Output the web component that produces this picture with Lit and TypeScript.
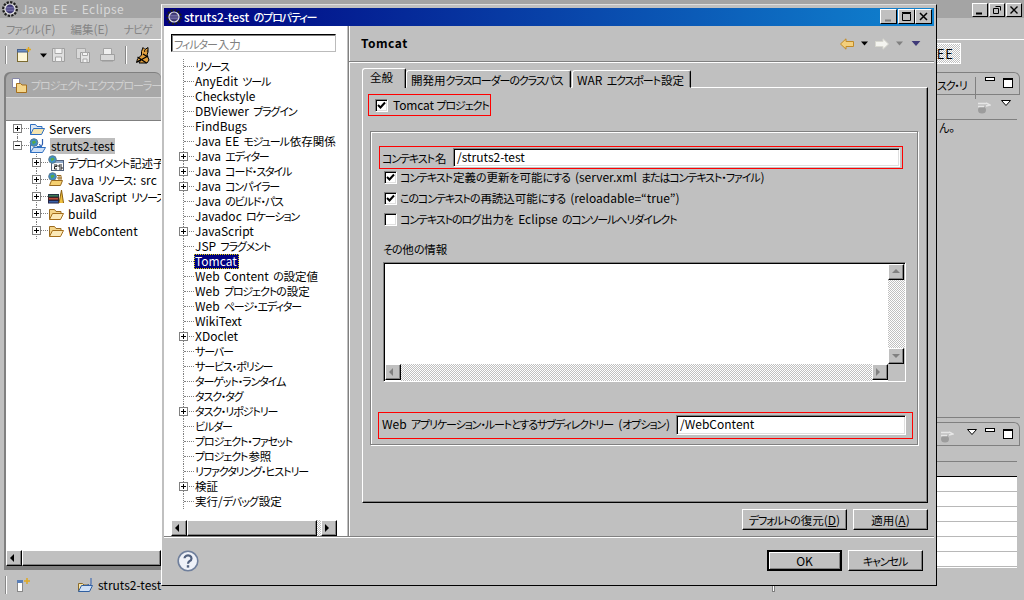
import { LitElement, html, css, TemplateResult } from "lit";
import { customElement } from "lit/decorators.js";

const jp = (s: string) =>
  s.split(/([\u3040-\u30FF]+|[\u4E00-\u9FFF]+)/).map((p, i) => {
    if (i % 2 === 0) return p;
    return /[\u3040-\u30FF]/.test(p) ? html`<span class="k">${p}</span>` : html`<span class="h">${p}</span>`;
  });

const gear = (s = 16) => html`<svg width=${s} height=${s} viewBox="0 0 16 16" class="ico">
  <circle cx="8" cy="8" r="6.700" fill="none" stroke="#1c1c1c" stroke-width="2.400" stroke-dasharray="2.200 1.300"/>
  <circle cx="8" cy="8" r="5.600" fill="#e4e4e4"/>
  <circle cx="8" cy="8" r="4.400" fill="#3b3570"/>
  <path d="M4 6.300h8M3.800 8h8.400M4 9.700h8" stroke="#8a86c0" stroke-width=".8"/>
</svg>`;

const folder = (open = true) => html`<svg width="16" height="14" viewBox="0 0 16 14" class="ico">
  <path d="M1.500 12.500V2.500h5l1.500 2h5v2" fill="#f4d58a" stroke="#9a6a20"/>
  <path d="M1.500 12.500l3-6h11l-3 6z" fill=${open ? "#fbe9b8" : "#f0c868"} stroke="#a56f1c"/>
</svg>`;

const serverFolder = () => html`<svg width="16" height="14" viewBox="0 0 16 14" class="ico">
  <path d="M1.500 12.500V2.500h5l1.500 2h5v2" fill="#dfe8f4" stroke="#2f6fc0"/>
  <path d="M1.500 12.500l3-6h11l-3 6z" fill="#f5e4ae" stroke="#2f6fc0"/>
</svg>`;

const webProject = () => html`<svg width="18" height="16" viewBox="0 0 18 16" class="ico">
  <path d="M1.500 14.500V6.500h5l1.500 2h5" fill="#dfe8f4" stroke="#2f6fc0"/>
  <path d="M1.500 14.500l3-5h12l-3 5z" fill="#cfe0f6" stroke="#2f6fc0"/>
  <circle cx="5" cy="4.500" r="3.800" fill="#3c8fc8" stroke="#5a7a90"/>
  <path d="M3 3.500l3-1 1 2-3 2z" fill="#58a848"/>
  <path d="M13.500 1v5a1.500 1.500 0 0 1-3 0" fill="none" stroke="#2f5fb0" stroke-width="1.200"/>
</svg>`;

const deployIcon = () => html`<svg width="16" height="16" viewBox="0 0 16 16" class="ico">
  <rect x="3.500" y="5.500" width="12" height="10" fill="#f8f8f8" stroke="#51607a"/>
  <rect x="4" y="6" width="11" height="2" fill="#8ea8c8"/>
  <circle cx="4.500" cy="4.500" r="3.800" fill="#3c8fc8" stroke="#5a7a90"/>
  <path d="M2.500 3.500l3-1 1 2-3 2z" fill="#58a848"/>
  <path d="M6 10h3v1.500H6.500V14H9M11 10h3M11 10v2h3v2h-3" fill="none" stroke="#222"/>
</svg>`;

const javaRes = () => html`<svg width="16" height="15" viewBox="0 0 16 15" class="ico">
  <circle cx="4.500" cy="4.500" r="3.800" fill="#3c8fc8" stroke="#5a7a90"/>
  <path d="M2.500 3.500l3-1 1 2-3 2z" fill="#58a848"/>
  <path d="M1.500 13.500l2-5h11l-2 5z" fill="#f5d070" stroke="#9a6a20"/>
  <path d="M9 3.500h4v5M11 3.500v5M9 6h5" fill="none" stroke="#9a6a20"/>
</svg>`;

const jsRes = () => html`<svg width="16" height="15" viewBox="0 0 16 15" class="ico">
  <rect x="0.500" y="5.500" width="10" height="2.500" fill="#3b7a54" stroke="#234"/>
  <rect x="0.500" y="8.500" width="10" height="2.500" fill="#b84a3a" stroke="#422"/>
  <rect x="0.500" y="11.500" width="10" height="2.500" fill="#3a62a8" stroke="#224"/>
  <path d="M11 14l2.500-13 2 13" fill="#f0c040" stroke="#8a6010"/>
</svg>`;

const tomcat = () => html`<svg width="16" height="17" viewBox="0 0 16 17" class="ico">
  <path d="M8 .5l2 2 3-2v4.500l-1 3 2 5-2 3H4l2-3.500-4.500 3 1-3.500 4-4 0-3.500z" fill="#e0a040" stroke="#000"/>
  <path d="M2 15l11-6M2.500 10l9 6M9 4h1.200M11.800 4h.8M8 7l5 3" stroke="#000" stroke-width="1.300"/>
</svg>`;

const newIcon = () => html`<svg width="16" height="16" viewBox="0 0 16 16" class="ico">
  <rect x="1.500" y="2.500" width="10" height="12" fill="#fdf6d8" stroke="#7a6a30"/>
  <rect x="1.500" y="2.500" width="10" height="2.500" fill="#6c8ec4" stroke="#47618c"/>
  <path d="M12.500 0v5M10 2.500h5" stroke="#e0a820" stroke-width="1.400"/>
</svg>`;

const saveIcon = () => html`<svg width="13" height="14" viewBox="0 0 13 14" class="ico">
  <path d="M.5.5h12v13H.5z" fill="#e0e0e0" stroke="#9e9e9e"/>
  <path d="M3 .5h7v5H3zM3.500 9h6v4.500h-6z" fill="#f4f4f4" stroke="#a8a8a8"/>
</svg>`;

const saveAll = () => html`<svg width="14" height="15" viewBox="0 0 14 15" class="ico">
  <path d="M.5.5h9v10h-9z" fill="#d8d8d8" stroke="#a8a8a8"/>
  <path d="M4.500 4.500h9v10h-9z" fill="#e4e4e4" stroke="#9e9e9e"/>
  <path d="M6.500 4.500h5v3h-5zM7 11h4v3.500H7z" fill="#f4f4f4" stroke="#a8a8a8"/>
</svg>`;

const printIcon = () => html`<svg width="15" height="14" viewBox="0 0 15 14" class="ico">
  <path d="M3.500.5h8v6h-8z" fill="#efefef" stroke="#a4a4a4"/>
  <path d="M.5 6.500h14v6H.5z" fill="#d8d8d8" stroke="#a0a0a0"/>
  <path d="M2 12.500h11v1H2z" fill="#9a9a9a"/>
</svg>`;

const arrow = (left: boolean, fill: string, stroke: string) => html`<svg width="14" height="12" viewBox="0 0 14 12" class="ico">
  <path d=${left ? "M.5 6L6 .8V3.500h7.500v5H6v2.700z" : "M13.500 6L8 .8V3.500H.5v5H8v2.700z"} fill=${fill} stroke=${stroke}/>
</svg>`;

const tri = (c: string, w = 7) => html`<svg width=${w} height="5" viewBox="0 0 7 4" class="ico"><path d="M0 0h7L3.500 4z" fill=${c}/></svg>`;
const triW = () => html`<svg width="10" height="6" viewBox="0 0 10 6" class="ico"><path d="M.5.500h9L5 5.500z" fill="#fff" stroke="#000"/></svg>`;

const pin = () => html`<svg width="14" height="14" viewBox="0 0 14 14" class="ico">
  <ellipse cx="5" cy="10" rx="4" ry="3.500" fill="#9c9c9c"/>
  <path d="M1 3.500h8M9 3l4 2-4 1M1 6.500h6" stroke="#e6e6e6" stroke-width="1.500" fill="none"/>
</svg>`;

const help = () => html`<svg width="22" height="22" viewBox="0 0 22 22" class="ico">
  <circle cx="11" cy="11" r="9.800" fill="#eef1f8" stroke="#6f7f9c" stroke-width="1.600"/>
  <path d="M7.500 8.300a3.500 3 0 1 1 5.200 2.700c-1.200.8-1.700 1.300-1.700 2.800" fill="none" stroke="#50607e" stroke-width="2.200"/>
  <rect x="9.800" y="15.200" width="2.400" height="2.400" fill="#50607e"/>
</svg>`;

const statusFolder = () => html`<svg width="16" height="15" viewBox="0 0 16 15" class="ico">
  <path d="M1.500 13.500V5.500h4l1.500 1.500h5" fill="#f5e4ae" stroke="#8a6a2a"/>
  <path d="M1.500 13.500l3-6h11l-3 6z" fill="#cfe0f6" stroke="#2f5fa0"/>
  <path d="M14 0v6a1.500 1.500 0 0 1-3 0" fill="none" stroke="#2f5fb0"/>
</svg>`;

const statusNew = () => html`<svg width="15" height="15" viewBox="0 0 15 15" class="ico">
  <rect x="1.500" y="2.500" width="5" height="11" fill="#fff" stroke="#888"/>
  <rect x="1" y="2" width="6" height="3" fill="#5a7fb8"/>
  <path d="M11 0v6M8 3h6" stroke="#e0a820" stroke-width="1.500"/>
</svg>`;

const check = () => html`<svg width="9" height="9" viewBox="0 0 9 9"><path d="M1 4l2.500 2.500L8 1.500" fill="none" stroke="#000" stroke-width="2"/></svg>`;

const scrollTri = (d: "l" | "r" | "u" | "d", c = "#000") => {
  const p = { l: "M5 1v8L1 5z", r: "M1 1v8l4-4z", u: "M1 6h8L5 2z", d: "M1 3h8L5 7z" }[d];
  return html`<svg width="10" height="10" viewBox="0 0 10 10"><path d=${p} fill=${c}/></svg>`;
};

const TREE: [string, boolean][] = [
  ["リソース", false], ["AnyEdit ツール", false], ["Checkstyle", false], ["DBViewer プラグイン", false],
  ["FindBugs", false], ["Java EE モジュール依存関係", false], ["Java エディター", true], ["Java コード・スタイル", true],
  ["Java コンパイラー", true], ["Java のビルド・パス", false], ["Javadoc ロケーション", false], ["JavaScript", true],
  ["JSP フラグメント", false], ["Tomcat", false], ["Web Content の設定値", false], ["Web プロジェクトの設定", false],
  ["Web ページ・エディター", false], ["WikiText", false], ["XDoclet", true], ["サーバー", false],
  ["サービス・ポリシー", false], ["ターゲット・ランタイム", false], ["タスク・タグ", false], ["タスク・リポジトリー", true],
  ["ビルダー", false], ["プロジェクト・ファセット", false], ["プロジェクト参照", false], ["リファクタリング・ヒストリー", false],
  ["検証", true], ["実行/デバッグ設定", false],
];

@customElement("app-root")
export class AppRoot extends LitElement {
  static styles = css`
    :host { display: block; position: relative; width: 1024px; height: 600px; overflow: hidden; background: #c0c0c0;
      font: 12px/14px "Noto Sans CJK JP", "Liberation Sans", sans-serif; color: #000; word-spacing: 1.500px; }
    * { box-sizing: border-box; }
    .k { font-size: 11px; font-feature-settings: "palt"; letter-spacing: -1.100px; margin-right: 1px; }
    .h { font-size: 11.500px; }
    .ico { display: block; flex: none; }
    .eclipse { display: flex; flex-direction: column; height: 600px; }
    .etitle { height: 18px; flex: none; background: #a4a4a4; display: flex; align-items: center; padding-left: 2px; gap: 3px; color: #d8d8d8; position: relative; letter-spacing: .4px; }
    .wbtns { position: absolute; right: 2px; top: 3px; display: flex; gap: 1px; }
    .wb { width: 16px; height: 14px; background: #c0c0c0; display: flex; align-items: center; justify-content: center; border: 1px solid; border-color: #fff #000 #000 #fff; }
    .wb svg { display: block; }
    .emenu { height: 22px; flex: none; display: flex; align-items: center; padding-left: 6px; gap: 15px; color: #858585; border-bottom: 1px solid #fff; }
    .etool { height: 30px; flex: none; display: flex; align-items: center; position: relative; }
    .tsep { width: 2px; height: 18px; background: #fff; border-left: 1px solid #888; margin: 0 0 0 5px; flex: none; }
    .t1 { margin-left: 9px; } .t2 { margin-left: 8px; } .t3 { margin-left: 5px; } .t4 { margin-left: 11px; } .t5 { margin-left: 10px; } .tsep.t6 { margin-left: 10px; } .t7 { margin-left: 8px; }
    .perspective { position: absolute; left: 920px; top: 3px; width: 41px; height: 21px; border: 1px solid #fff;
      background: repeating-conic-gradient(#fff 0 25%, #c0c0c0 0 50%) 0 0/2px 2px; display: flex; align-items: center; justify-content: flex-end; padding-right: 6px; font-size: 13px; letter-spacing: 1px; }
    .emain { flex: 1; display: flex; padding: 2px 4px 0; justify-content: space-between; min-height: 0; }
    .lview { width: 157px; height: 498px; display: flex; flex-direction: column; background: #808080; border-radius: 6px 6px 0 0; padding: 1px 0 4px 2px; }
    .ltab { height: 24px; flex: none; background: #a8a8a8; border-radius: 6px 6px 0 0; display: flex; align-items: center; padding-left: 5px; gap: 3px; color: #d0d0d0; white-space: nowrap; overflow: hidden; }
    .ltool { height: 23px; flex: none; background: #c0c0c0; border-top: 1px solid #d8d8d8; }
    .ltree { flex: 1; background: #fff; border-top: 1px solid #808080; min-height: 0; overflow: hidden; }
    .lrow { height: 17px; display: flex; align-items: center; position: relative; white-space: nowrap; }
    .lrow:first-child { margin-top: -1px; }
    .lrow.l1 { padding-left: 7px; }
    .lrow.l2 { padding-left: 26px; }
    .lrow::before { content: ""; position: absolute; top: 0; height: 17px; border-left: 1px dotted #808080; }
    .lrow.l1::before { left: 11px; }
    .lrow.l2::before { left: 30px; }
    .lrow.l1:first-child::before { top: 9px; height: 8px; }
    .lrow.l1:nth-child(2)::before { height: 8px; }
    .box { width: 9px; height: 9px; border: 1px solid #808080; background: #fff; display: flex; align-items: center; justify-content: center; flex: none; position: relative; z-index: 1; }
    .box svg { display: block; }
    .conn { width: 7px; border-top: 1px dotted #808080; flex: none; }
    .ltext { margin-left: 3px; padding: 0 1px; height: 16px; line-height: 15px; }
    .ltext.sel { background: #bdbdbd; }
    .lscroll { height: 16px; flex: none; background: #c0c0c0; display: flex; }
    .rcol { width: 120px; display: flex; flex-direction: column; height: 498px; gap: 4px; }
    .rpanel { flex: none; height: 346px; border-bottom: 1px solid #808080; }
    .rtabs { height: 23px; display: flex; justify-content: flex-end; align-items: flex-start; border-bottom: 1px solid #808080; position: relative; gap: 8px; padding: 5px 6px 0 0; border-top: 1px solid #808080; border-top-right-radius: 6px; border-right: 1px solid #808080; }
    .rlabel { position: absolute; left: 0; top: 4px; width: 76px; padding-left: 37px; white-space: nowrap; height: 22px; border-right: 1px solid #808080; line-height: 16px; }
    .minb { width: 10px; height: 4px; background: #fff; border: 1px solid #000; margin-top: -1px; }
    .maxb { width: 10px; height: 10px; background: #fff; border: 1px solid #000; border-top-width: 2px; }
    .rtool { height: 25px; display: flex; justify-content: flex-end; gap: 10px; padding: 5px 6px 0 0; border-bottom: 1px solid #808080; margin-right: 3px; }
    .rtext { padding: 0 0 0 39px; }
    .rpanel2 { flex: 1; display: flex; flex-direction: column; }
    .rtabs2 { height: 24px; display: flex; justify-content: flex-end; gap: 8px; align-items: flex-start; padding: 6px 6px 0 0; border-bottom: 1px solid #808080; border-top: 1px solid #808080; border-right: 1px solid #808080; border-top-right-radius: 6px; }
    .rtabs2 .pinw { margin-right: 5px; }
    .rhead { height: 16px; border-bottom: 1px solid #808080; flex: none; margin-right: 3px; }
    .rtable { flex: 1; background: #fff; border-top: 1px solid #000; margin: 14px 3px 2px 0; display: flex; flex-direction: column; }
    .rtable div { height: 15px; border-bottom: 1px solid #b8b8b8; flex: none; }
    .estatus { height: 30px; flex: none; display: flex; align-items: center; position: relative; }
    .stext { margin-left: 5px; }
    .s1 { margin-left: 9px; } .s2 { margin-left: 46px; }

    .dialog { position: absolute; left: 161px; top: 4px; width: 776px; height: 582px; background: #c0c0c0; border: 1px solid; border-color: #dfdfdf #000 #000 #fff; padding: 3px 2px 2px; display: flex; flex-direction: column; }
    .dtitle { height: 18px; flex: none; background: linear-gradient(90deg, #000080, #1084d0); display: flex; align-items: center; padding-left: 2px; gap: 2px; color: #fff; font-weight: 500; position: relative; }
    .dbtns { position: absolute; right: 2px; top: 1px; display: flex; }
    .dbtn { width: 17px; height: 15px; background: #c0c0c0; border: 1px solid; border-color: #fff #000 #000 #fff; display: flex; align-items: center; justify-content: center; }
    .dbtn.m { margin-right: 1px; }
    .dbtn svg { display: block; }
    .dbody { height: 510px; flex: none; display: flex; }
    .dleft { width: 183px; flex: none; background: #fff; padding: 8px 0 0 7px; display: flex; flex-direction: column; }
    .filter { width: 165px; height: 18px; flex: none; border: 1px solid; border-color: #000 #bbb #bbb #000; box-shadow: inset 1px 1px #808080; color: #808080; padding: 2px 0 0 2px; line-height: 14px; }
    .tree { margin: 7px 0 0 12px; }
    .trow { height: 15px; display: flex; align-items: center; white-space: nowrap; }
    .guide { width: 10px; height: 15px; border-left: 1px dotted #808080; position: relative; flex: none; }
    .guide::after { content: ""; position: absolute; left: 0; top: 7px; width: 10px; border-top: 1px dotted #808080; }
    .plus { position: absolute; left: -5px; top: 3px; z-index: 1; }
    .tlabel { margin-left: 1px; padding: 0 1px; height: 15px; line-height: 14px; }
    .tlabel.sel { background: #000080; color: #fff; outline: 1px dotted #e8d800; outline-offset: -1px; padding: 0 2px 0 1px; }
    .hscroll { height: 16px; flex: none; display: flex; margin-top: 11px; width: 166px; }
    .sb { width: 16px; height: 16px; flex: none; background: #c0c0c0; border: 1px solid; border-color: #fff #000 #000 #fff; box-shadow: inset -1px -1px #808080; display: flex; align-items: center; justify-content: center; }
    .thumb { flex: 1; height: 16px; background: #c0c0c0; border: 1px solid; border-color: #fff #000 #000 #fff; box-shadow: inset -1px -1px #808080; }
    .dith { background: repeating-conic-gradient(#fff 0 25%, #c0c0c0 0 50%) 0 0/2px 2px; }
    .d4 { width: 4px; flex: none; }
    .dgrow { flex: 1; }
    .dright { flex: 1; border-left: 1px solid #808080; margin-left: 1px; box-shadow: inset 1px 0 #fff; display: flex; flex-direction: column; min-width: 0; }
    .dhead { height: 35px; flex: none; display: flex; align-items: center; padding: 0 13px 0 12px; font-weight: 700; gap: 7px; }
    .dhead .ht { flex: 1; letter-spacing: .5px; margin-top: -1px; }
    .dhead .a3 { margin-left: 1px; }
    .hr { height: 2px; flex: none; background: #808080; border-bottom: 1px solid #fff; }
    .dmain { flex: 1; padding: 5px 0 0 13px; display: flex; flex-direction: column; min-height: 0; }
    .tabs { display: flex; height: 20px; flex: none; align-items: flex-end; position: relative; z-index: 1; }
    .tab { height: 18px; border: 1px solid; border-color: #fff #000 transparent #fff; border-radius: 3px 2px 0 0; padding: 2px 0 0 4px; white-space: nowrap; background: #c0c0c0; box-shadow: inset -1px 0 #808080; }
    .tab.a { height: 20px; width: 44px; padding: 1px 0 0 7px; border-bottom: 0; }
    .tab.b { width: 165px; }
    .tab.c { width: 119px; margin-left: 1px; }
    .pane { width: 566px; height: 416px; flex: none; margin-top: -1px; border: 1px solid; border-color: #fff #000 #000 #fff; box-shadow: inset -1px -1px #808080; padding: 6px 0 0 5px; }
    .red { border: 1px solid #f00; }
    .red1 { width: 123px; height: 22px; display: flex; align-items: center; padding-left: 6px; gap: 5px; white-space: nowrap; word-spacing: 0; letter-spacing: -.15px; }
    .cb { width: 13px; height: 13px; flex: none; background: #fff; border: 1px solid; border-color: #808080 #fff #fff #808080; box-shadow: inset 1px 1px #000, inset -1px -1px #dfdfdf; display: flex; align-items: center; justify-content: center; }
    .cb svg { display: block; }
    .group { margin: 15px 0 0 2px; width: 548px; height: 314px; border: 1px solid #808080; box-shadow: inset 1px 1px #fff, 1px 1px #fff; padding: 14px 0 0 8px; }
    .red2 { width: 524px; height: 23px; display: flex; align-items: center; padding: 0 2px; white-space: nowrap; justify-content: space-between; }
    .inp { background: #fff; border: 1px solid; border-color: #808080 #fff #fff #808080; box-shadow: inset 1px 1px #000, inset -1px -1px #dfdfdf; padding: 1px 0 0 3px; height: 19px; white-space: nowrap; flex: none; }
    .inp2 { width: 447px; }
    .crow { display: flex; align-items: center; gap: 3px; height: 14px; margin: 7px 0 0 5px; white-space: nowrap; }
    .crow.f { margin-top: 1px; }
    .other { margin: 16px 0 0 4px; height: 14px; }
    .ta { margin: 6px 0 0 4px; width: 523px; height: 120px; border: 1px solid; border-color: #808080 #fff #fff #808080; box-shadow: inset 1px 1px #000; display: grid; grid-template-columns: 1fr 17px; grid-template-rows: 1fr 17px; background: #fff; padding: 1px 0 0 1px; }
    .tabar { background: #c0c0c0; display: flex; flex-direction: column; }
    .hbar { display: flex; grid-column: 1; }
    .corner { background: #c0c0c0; }
    .red3 { margin: 30px 0 0 -1px; width: 535px; height: 27px; display: flex; align-items: center; padding: 0 2px 3px 3px; white-space: nowrap; justify-content: space-between; }
    .inp3 { width: 230px; height: 20px; margin-top: 2px; margin-right: 4px; }
    .acts { display: flex; justify-content: flex-end; gap: 6px; margin: 6px 6px 0 0; height: 21px; flex: none; }
    .btn { height: 21px; background: #c0c0c0; border: 1px solid; border-color: #fff #000 #000 #fff; box-shadow: inset -1px -1px #808080; display: flex; align-items: center; justify-content: center; white-space: nowrap; }
    .w105 { width: 105px; } .w75 { width: 75px; }
    .btn.def { outline: 1px solid #000; outline-offset: -1px; border-width: 2px; border-color: #000; box-shadow: inset 1px 1px #fff, inset -1px -1px #808080; }
    .dsep { height: 2px; flex: none; background: #808080; border-bottom: 1px solid #fff; }
    .dfoot { flex: 1; display: flex; align-items: center; padding: 0 11px 0 13px; gap: 6px; }
    .dfoot .sp { flex: 1; }
    .tick { position: absolute; left: 772px; top: 586px; width: 3px; height: 6px; background: #fff; border: 1px solid #808080; border-top: 0; }
  `;

  private lrow(level: number, open: boolean, icon: TemplateResult, text: string, sel = false) {
    return html`<div class="lrow l${level}">
      <span class="box"><svg width="7" height="7" viewBox="0 0 7 7"><path d=${open ? "M1 3.500h5" : "M1 3.500h5M3.500 1v5"} stroke="#000"/></svg></span>
      <span class="conn"></span>${icon}
      <span class="ltext ${sel ? "sel" : ""}">${jp(text)}</span>
    </div>`;
  }

  render() {
    return html`
      <div class="eclipse">
        <div class="etitle">${gear()}<span>Java EE - Eclipse</span>
          <div class="wbtns">
            <span class="wb"><svg width="10" height="10"><path d="M1 8.500h6" stroke="#000" stroke-width="2"/></svg></span>
            <span class="wb"><svg width="10" height="10"><path d="M3.500 1.500h5v4M1.500 3.500h5v5h-5z" fill="none" stroke="#000"/></svg></span>
            <span class="wb"><svg width="10" height="10"><path d="M1.500 1.500l7 7M8.500 1.500l-7 7" stroke="#000" stroke-width="1.400"/></svg></span>
          </div>
        </div>
        <div class="emenu"><span>${jp("ファイル(F)")}</span><span>${jp("編集(E)")}</span><span>${jp("ナビゲ")}</span></div>
        <div class="etool">
          <span class="tsep"></span><span class="t1">${newIcon()}</span>
          <span class="t2">${tri("#000")}</span><span class="t3">${saveIcon()}</span>
          <span class="t4">${saveAll()}</span><span class="t5">${printIcon()}</span>
          <span class="tsep t6"></span><span class="t7">${tomcat()}</span>
          <span class="perspective">EE</span>
        </div>
        <div class="emain">
          <div class="lview">
            <div class="ltab"><svg width="17" height="17" viewBox="0 0 17 17" class="ico"><path d="M1.500 1.500h7v9h-7z" fill="#fff" stroke="#8888a8"/><path d="M5.500 15.500v-9h4l1.500 1.500h4.500v7.500z" fill="#f4d58a" stroke="#a56f1c"/></svg><span>${jp("プロジェクト・エクスプローラー")}</span></div>
            <div class="ltool"></div>
            <div class="ltree">
              ${this.lrow(1, false, serverFolder(), "Servers")}
              ${this.lrow(1, true, webProject(), "struts2-test", true)}
              ${this.lrow(2, false, deployIcon(), "デプロイメント記述子: struts2-test")}
              ${this.lrow(2, false, javaRes(), "Java リソース: src")}
              ${this.lrow(2, false, jsRes(), "JavaScript リソース")}
              ${this.lrow(2, false, folder(), "build")}
              ${this.lrow(2, false, folder(), "WebContent")}
            </div>
            <div class="lscroll"><span class="sb">${scrollTri("l")}</span><span class="thumb"></span></div>
          </div>
          <div class="rcol">
            <div class="rpanel">
              <div class="rtabs"><span class="rlabel">${jp("スク・リ")}</span><span class="minb"></span><span class="maxb"></span></div>
              <div class="rtool">${pin()}${triW()}</div>
              <div class="rtext">${jp("ん。")}</div>
            </div>
            <div class="rpanel2">
              <div class="rtabs2"><span class="pinw">${pin()}</span>${triW()}<span class="minb"></span><span class="maxb"></span></div>
              <div class="rhead"></div>
              <div class="rtable"><div></div><div></div><div></div><div></div><div></div><div></div></div>
            </div>
          </div>
        </div>
        <div class="estatus">
          <span class="tsep"></span><span class="s1">${statusNew()}</span>
          <span class="s2">${statusFolder()}</span><span class="stext">struts2-test</span>
        </div>
      </div>

      <div class="tick"></div>

      <div class="dialog">
        <div class="dtitle">${gear()}<span>${jp("struts2-test のプロパティー")}</span>
          <div class="dbtns">
            <span class="dbtn m"><svg width="11" height="11"><path d="M2 9.500h6" stroke="#808080" stroke-width="2"/></svg></span>
            <span class="dbtn"><svg width="11" height="11"><path d="M1.500 2.500h8v7h-8z" fill="none" stroke="#000"/><path d="M1 1.500h9" stroke="#000"/></svg></span>
            <span class="dbtn"><svg width="11" height="11"><path d="M2 2l7 7M9 2l-7 7" stroke="#000" stroke-width="1.500"/></svg></span>
          </div>
        </div>
        <div class="dbody">
          <div class="dleft">
            <div class="filter">${jp("フィルター入力")}</div>
            <div class="tree">
              ${TREE.map(([t, p]) => html`<div class="trow">
                <span class="guide">${p ? html`<span class="box plus"><svg width="7" height="7" viewBox="0 0 7 7"><path d="M1 3.500h5M3.500 1v5" stroke="#000"/></svg></span>` : ""}</span>
                <span class="tlabel ${t === "Tomcat" ? "sel" : ""}">${jp(t)}</span>
              </div>`)}
            </div>
            <div class="hscroll">
              <span class="sb">${scrollTri("l")}</span><span class="thumb"></span><span class="d4 dith"></span><span class="sb">${scrollTri("r")}</span>
            </div>
          </div>
          <div class="dright">
            <div class="dhead"><span class="ht">Tomcat</span>
              ${arrow(true, "#f3cf7c", "#c08a28")}${tri("#000")}
              ${arrow(false, "#f4f4f0", "#d8d8d0")}${tri("#808080")}
              <span class="a3">${tri("#3f3a78", 10)}</span>
            </div>
            <div class="hr"></div>
            <div class="dmain">
              <div class="tabs">
                <div class="tab a">${jp("全般")}</div>
                <div class="tab b">${jp("開発用クラスローダーのクラスパス")}</div>
                <div class="tab c">${jp("WAR エクスポート設定")}</div>
              </div>
              <div class="pane">
                <div class="red red1"><span class="cb">${check()}</span><span>${jp("Tomcat プロジェクト")}</span></div>
                <div class="group">
                  <div class="red red2"><span>${jp("コンテキスト名")}</span><div class="inp inp2">/struts2-test</div></div>
                  <div class="crow f"><span class="cb">${check()}</span><span>${jp("コンテキスト定義の更新を可能にする (server.xml またはコンテキスト・ファイル)")}</span></div>
                  <div class="crow"><span class="cb">${check()}</span><span>${jp("このコンテキストの再読込可能にする (reloadable=“true”)")}</span></div>
                  <div class="crow"><span class="cb"></span><span>${jp("コンテキストのログ出力を Eclipse のコンソールへリダイレクト")}</span></div>
                  <div class="other">${jp("その他の情報")}</div>
                  <div class="ta">
                    <div></div>
                    <div class="tabar"><span class="sb">${scrollTri("u", "#808080")}</span><span class="dgrow dith"></span><span class="sb">${scrollTri("d", "#808080")}</span></div>
                    <div class="hbar"><span class="sb">${scrollTri("l", "#808080")}</span><span class="dgrow dith"></span><span class="sb">${scrollTri("r", "#808080")}</span></div>
                    <div class="corner"></div>
                  </div>
                  <div class="red red3"><span>${jp("Web アプリケーション・ルートとするサブディレクトリー (オプション)")}</span><div class="inp inp3">/WebContent</div></div>
                </div>
              </div>
              <div class="acts">
                <div class="btn w105"><span>${jp("デフォルトの復元")}(<u>D</u>)</span></div>
                <div class="btn w75"><span>${jp("適用")}(<u>A</u>)</span></div>
              </div>
            </div>
          </div>
        </div>
        <div class="dsep"></div>
        <div class="dfoot">
          ${help()}<span class="sp"></span>
          <div class="btn w75 def">OK</div>
          <div class="btn w75">${jp("キャンセル")}</div>
        </div>
      </div>
    `;
  }
}
